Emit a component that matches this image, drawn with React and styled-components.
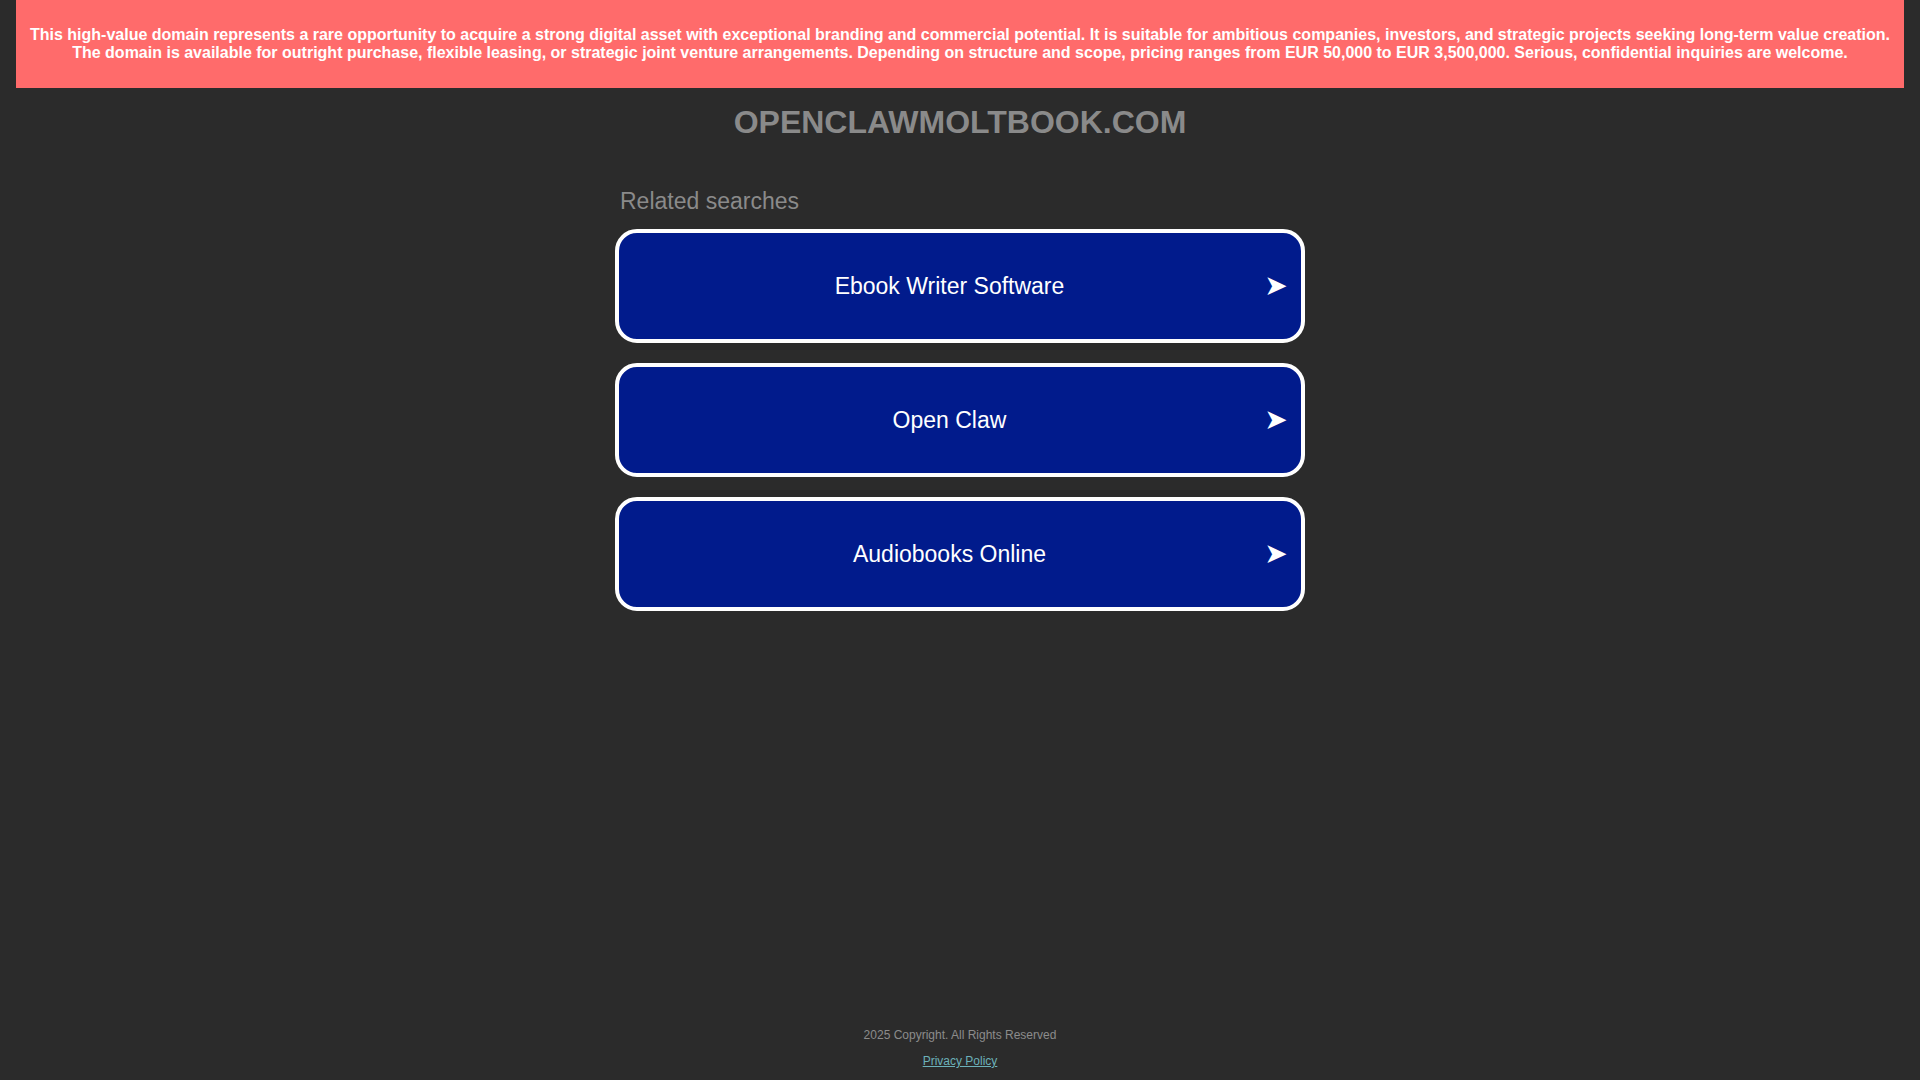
import React from "react";
import styled, { createGlobalStyle } from "styled-components";

const searches = ["Ebook Writer Software", "Open Claw", "Audiobooks Online"];

const App = () => {
  return (
    <>
      <GlobalStyle />
      <Page>
        <Banner>
          <BannerLine>
            This high-value domain represents a rare opportunity to acquire a strong digital asset with
            exceptional branding and commercial potential. It is suitable for ambitious companies,
            investors, and strategic projects seeking long-term value creation.
          </BannerLine>
          <BannerLine>
            The domain is available for outright purchase, flexible leasing, or strategic joint venture
            arrangements. Depending on structure and scope, pricing ranges from EUR 50,000 to EUR
            3,500,000. Serious, confidential inquiries are welcome.
          </BannerLine>
        </Banner>

        <DomainTitle>OPENCLAWMOLTBOOK.COM</DomainTitle>

        <Searches>
          <SearchHeading>Related searches</SearchHeading>
          <SearchList>
            {searches.map((label) => (
              <SearchLink key={label} href="#">
                <SearchLabel>{label}</SearchLabel>
                <Arrow>➤</Arrow>
              </SearchLink>
            ))}
          </SearchList>
        </Searches>

        <Footer>
          <Copyright>2025 Copyright. All Rights Reserved</Copyright>
          <PolicyLink href="#">Privacy Policy</PolicyLink>
        </Footer>
      </Page>
    </>
  );
};

export default App;

// Styled Components
const GlobalStyle = createGlobalStyle`
  html, body {
    margin: 0;
    padding: 0;
    background: #2b2b2b;
  }

  body {
    font-family: "Liberation Sans", Arial, sans-serif;
  }
`;

const Page = styled.div`
  display: flex;
  flex-direction: column;
  align-items: center;
  min-height: 100vh;
`;

const Banner = styled.div`
  align-self: stretch;
  margin: 0 16px;
  padding: 26px 10px;
  background: #ff6b6b;
  color: #ffffff;
  font-size: 16px;
  font-weight: bold;
  line-height: 18px;
  text-align: center;
`;

const BannerLine = styled.div``;

const DomainTitle = styled.h1`
  margin: 16px 0 0;
  font-size: 32px;
  font-weight: bold;
  color: #8a8a8a;
`;

const Searches = styled.div`
  width: 690px;
  margin-top: 47px;
`;

const SearchHeading = styled.div`
  padding-left: 5px;
  font-size: 23px;
  color: #8a8a8a;
`;

const SearchList = styled.div`
  display: flex;
  flex-direction: column;
  gap: 20px;
  margin-top: 14px;
`;

const SearchLink = styled.a`
  display: flex;
  align-items: center;
  box-sizing: border-box;
  height: 114px;
  padding: 0 12px 0 17px;
  border: 4px solid #ffffff;
  border-radius: 22px;
  background: #011b8c;
  color: #ffffff;
  text-decoration: none;
`;

const SearchLabel = styled.span`
  flex: 1;
  text-align: center;
  font-size: 23px;
`;

const Arrow = styled.span`
  width: 26px;
  font-family: "DejaVu Sans", sans-serif;
  font-size: 28px;
  line-height: 1;
  text-align: center;
`;

const Footer = styled.div`
  display: flex;
  flex-direction: column;
  align-items: center;
  gap: 12px;
  margin-top: auto;
  padding-bottom: 12px;
  font-size: 12px;
`;

const Copyright = styled.div`
  color: #8c8c8c;
`;

const PolicyLink = styled.a`
  color: #6cb1ba;
  text-decoration: underline;
`;
